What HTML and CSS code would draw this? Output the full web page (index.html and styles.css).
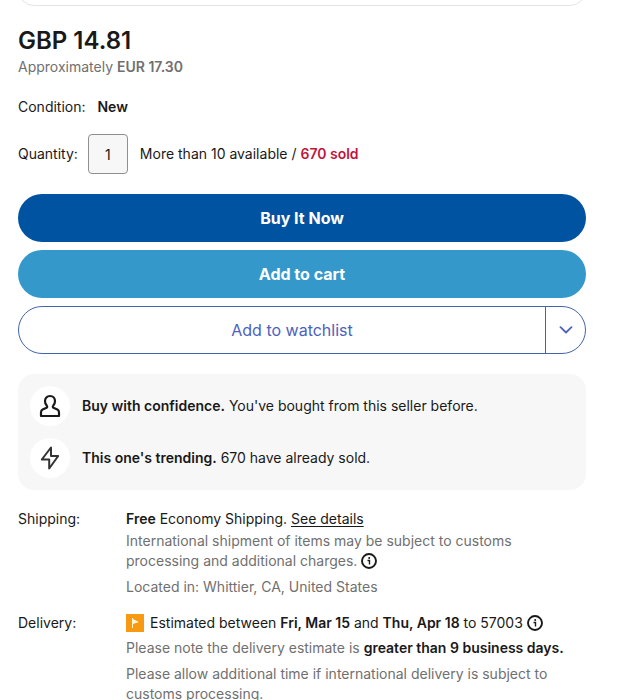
FILE: index.html
```
<!DOCTYPE html>
<html lang="en">

<head>
    <meta charset="UTF-8">
    <meta name="viewport" content="width=device-width, initial-scale=1.0">
    <title>Buy box</title>
    <link rel="stylesheet" href="styles.css">
</head>

<body>
    <main class="page">

        <div class="panel-end"></div>

        <section class="price">
            <h1>GBP 14.81</h1>
            <p class="muted">Approximately <b>EUR 17.30</b></p>
        </section>

        <form class="buybox">
            <p class="condition">Condition: <b>New</b></p>

            <div class="quantity">
                <label for="qty">Quantity:</label>
                <input type="text" id="qty" value="1">
                <p>More than 10 available / <b class="sold">670 sold</b></p>
            </div>

            <div class="actions">
                <button type="button" class="btn buy">Buy It Now</button>
                <button type="button" class="btn cart">Add to cart</button>
                <div class="watch">
                    <button type="button" class="watch-add">Add to watchlist</button>
                    <button type="button" class="watch-more" aria-label="More watchlist options">
                        <svg width="14" height="8" viewBox="0 0 14 8">
                            <path d="M1.500 1.200 7 6.500l5.500-5.300" fill="none" stroke="currentColor" stroke-width="1.800" stroke-linecap="round" stroke-linejoin="round" />
                        </svg>
                    </button>
                </div>
            </div>
        </form>

        <ul class="signals">
            <li>
                <span class="circle">
                    <svg width="22" height="24" viewBox="0 0 22 24">
                        <path d="M11 2C7.900 2 6 4.200 6 7.200c0 1.900.8 3.600 1.900 4.700.5.600.4 1.500-.3 1.900l-4 1.700C2.400 16.100 2 17.300 2 18.500V22h18v-3.500c0-1.200-.4-2.400-1.600-3l-4-1.700c-.7-.4-.8-1.300-.3-1.900C15.200 10.800 16 9.100 16 7.200 16 4.200 14.100 2 11 2Z" fill="none" stroke="#191919" stroke-width="2.200" stroke-linejoin="round" />
                    </svg>
                </span>
                <p><b>Buy with confidence.</b> You've bought from this seller before.</p>
            </li>
            <li>
                <span class="circle">
                    <svg width="20" height="24" viewBox="0 0 20 24">
                        <path d="M11 1.500 1.800 13.500h7.400v9L18.200 10H11Z" fill="none" stroke="#333" stroke-width="2" stroke-linejoin="round" />
                    </svg>
                </span>
                <p><b>This one's trending.</b> 670 have already sold.</p>
            </li>
        </ul>

        <dl class="details">
            <dt>Shipping:</dt>
            <dd>
                <p><b>Free</b> Economy Shipping. <a href="#">See details</a></p>
                <p class="muted customs">International shipment of items may be subject to customs processing and additional charges.
                    <button type="button" class="info" aria-label="Customs information">
                        <svg width="16" height="16" viewBox="0 0 16 16">
                            <circle cx="8" cy="8" r="7" fill="none" stroke="currentColor" stroke-width="1.900" />
                            <path d="M6.500 7.500h2v4" fill="none" stroke="currentColor" stroke-width="1.400" />
                            <circle cx="8.200" cy="4.900" r="1" fill="currentColor" />
                        </svg>
                    </button>
                </p>
                <p class="muted">Located in: Whittier, CA, United States</p>
            </dd>

            <dt>Delivery:</dt>
            <dd>
                <p class="estimate">
                    <svg class="flag" width="18" height="18" viewBox="0 0 18 18">
                        <rect width="18" height="18" fill="#f79a12" />
                        <path d="M6 4h1v10H6zM7 5l6 3-6 2Z" fill="#fff6d8" />
                    </svg>
                    <span>Estimated between <b>Fri, Mar 15</b> and <b>Thu, Apr 18</b> to 57003
                        <button type="button" class="info" aria-label="Delivery information">
                            <svg width="16" height="16" viewBox="0 0 16 16">
                                <circle cx="8" cy="8" r="7" fill="none" stroke="currentColor" stroke-width="1.900" />
                                <path d="M6.500 7.500h2v4" fill="none" stroke="currentColor" stroke-width="1.400" />
                                <circle cx="8.200" cy="4.900" r="1" fill="currentColor" />
                            </svg>
                        </button>
                    </span>
                </p>
                <p class="muted">Please note the delivery estimate is <b class="dark">greater than 9 business days.</b></p>
                <p class="muted">Please allow additional time if international delivery is subject to customs processing.</p>
            </dd>
        </dl>

    </main>
</body>

</html>
```

FILE: styles.css
```
* {
    box-sizing: border-box;
}

body {
    margin: 0;
    background: #fff;
    color: #191919;
    font-family: Inter, "Liberation Sans", sans-serif;
    font-size: 14px;
    line-height: 20px;
}

h1,
p,
ul,
dl,
dd {
    margin: 0;
    padding: 0;
}

b {
    font-weight: 600;
}

button,
input {
    font-family: inherit;
    color: inherit;
}

button {
    cursor: pointer;
}

.page {
    display: flow-root;
    padding: 0 54px 0 18px;
}

/* lower edge of the panel above */
.panel-end {
    height: 32px;
    margin-top: -26px;
    border: 1px solid #e5e5e5;
    border-radius: 16px;
}

.muted {
    color: #707070;
}

.price {
    padding-top: 19px;
}

h1 {
    font-size: 24px;
    line-height: 32px;
    font-weight: 600;
}

.condition {
    margin-top: 20px;
}

.condition b {
    margin-left: 8px;
}

.quantity {
    display: flex;
    align-items: center;
    margin-top: 17px;
}

#qty {
    width: 40px;
    height: 40px;
    margin: 0 12px 0 10px;
    padding: 0;
    border: 1px solid #8f8f8f;
    border-radius: 4px;
    background: #f7f7f7;
    font-size: 14px;
    text-align: center;
}

.sold {
    color: #c2143d;
}

.actions {
    display: grid;
    gap: 8px;
    margin-top: 20px;
}

.btn {
    height: 48px;
    border: 0;
    border-radius: 24px;
    color: #fff;
    font-size: 16px;
    font-weight: 700;
}

.buy {
    background: #0053a0;
}

.cart {
    background: #3498ca;
}

.watch {
    display: flex;
    height: 48px;
    border: 1px solid #4463ad;
    border-radius: 24px;
    color: #4c62bd;
}

.watch button {
    border: 0;
    background: none;
}

.watch-add {
    flex: 1;
    padding: 0 0 0 20px;
    font-size: 16px;
}

.watch .watch-more {
    display: flex;
    align-items: center;
    justify-content: center;
    width: 40px;
    padding: 0;
    border-left: 1px solid #4463ad;
}

.signals {
    display: grid;
    gap: 12px;
    margin-top: 20px;
    padding: 12px;
    border-radius: 16px;
    background: #f7f7f7;
    list-style: none;
}

.signals li {
    display: flex;
    align-items: center;
    gap: 12px;
}

.circle {
    display: flex;
    align-items: center;
    justify-content: center;
    width: 40px;
    height: 40px;
    border-radius: 50%;
    background: #fff;
}

.details {
    display: grid;
    grid-template-columns: 108px 1fr;
    row-gap: 16px;
    margin-top: 19px;
}

.details p + p {
    margin-top: 6px;
}

.details p + .customs {
    margin-top: 2px;
}

.details .estimate + p {
    margin-top: 5px;
}

.details a {
    color: inherit;
    text-underline-offset: 2px;
}

.info {
    padding: 0;
    border: 0;
    background: none;
    color: #191919;
    line-height: 0;
    vertical-align: -3px;
}

.info svg {
    display: block;
}

.estimate {
    display: flex;
    align-items: center;
    gap: 6px;
}

.dark {
    color: #191919;
}
```
